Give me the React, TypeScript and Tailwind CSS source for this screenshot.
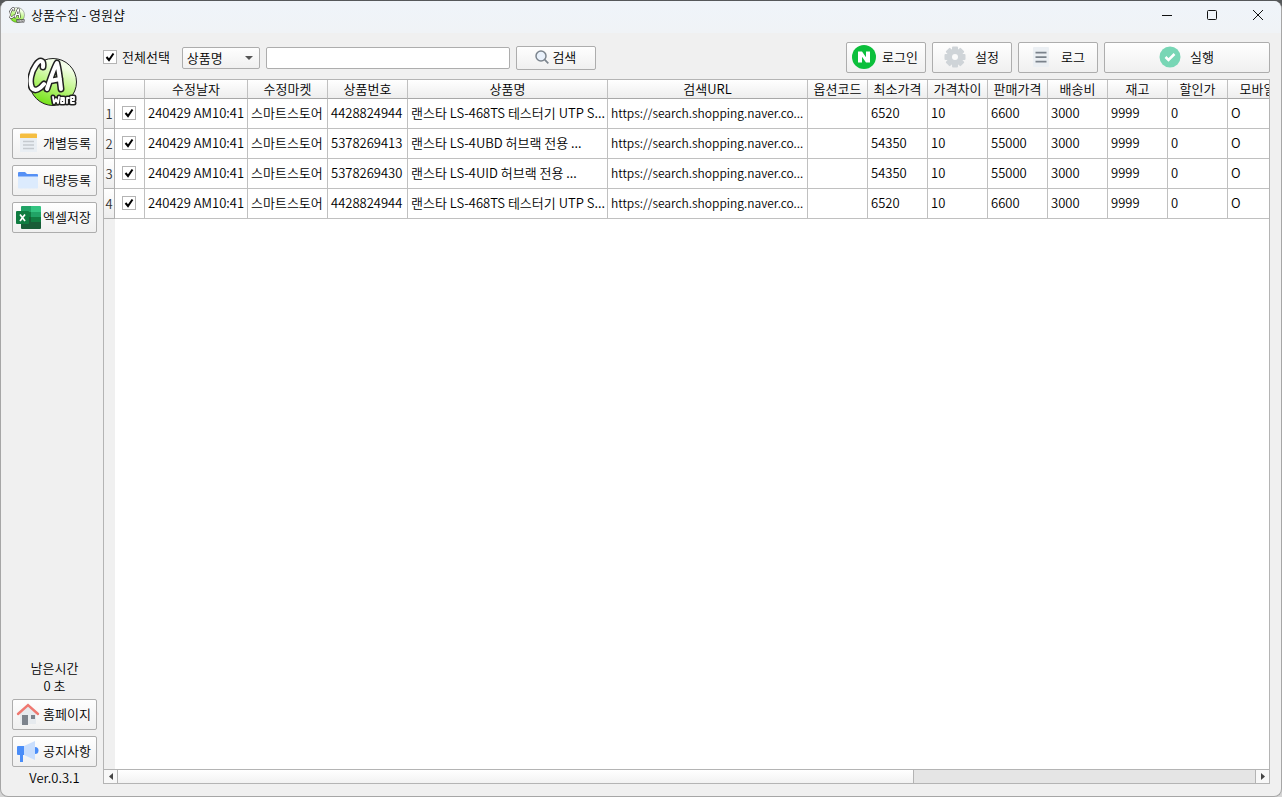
import type { ReactNode } from "react"
import clsx from "clsx"

const buttonStyle =
  "flex items-center rounded-xs border border-[#adadad] bg-linear-to-b from-[#fefefe] to-[#f0f0f0] pb-0.5 whitespace-nowrap"

const columns = [
  { label: "수정날자", width: "w-[103px]" },
  { label: "수정마켓", width: "w-20" },
  { label: "상품번호", width: "w-20" },
  { label: "상품명", width: "w-[200px]" },
  { label: "검색URL", width: "w-[200px]" },
  { label: "옵션코드", width: "w-15" },
  { label: "최소가격", width: "w-15" },
  { label: "가격차이", width: "w-15" },
  { label: "판매가격", width: "w-15" },
  { label: "배송비", width: "w-15" },
  { label: "재고", width: "w-15" },
  { label: "할인가", width: "w-15" },
  { label: "모바일", width: "w-15" },
]

const url = "https://search.shopping.naver.co..."

const rows = [
  ["240429 AM10:41", "스마트스토어", "4428824944", "랜스타 LS-468TS 테스터기 UTP S...", url, "", "6520", "10", "6600", "3000", "9999", "0", "O"],
  ["240429 AM10:41", "스마트스토어", "5378269413", "랜스타 LS-4UBD 허브랙 전용 ...", url, "", "54350", "10", "55000", "3000", "9999", "0", "O"],
  ["240429 AM10:41", "스마트스토어", "5378269430", "랜스타 LS-4UID 허브랙 전용 ...", url, "", "54350", "10", "55000", "3000", "9999", "0", "O"],
  ["240429 AM10:41", "스마트스토어", "4428824944", "랜스타 LS-468TS 테스터기 UTP S...", url, "", "6520", "10", "6600", "3000", "9999", "0", "O"],
]

function Logo({ className, id }: { className: string; id: string }) {
  return (
    <svg viewBox="0 0 50 50" className={className} aria-hidden="true">
      <defs>
        <linearGradient id={id} x1="0.7" y1="0" x2="0.3" y2="1">
          <stop offset="0.15" stopColor="#f4ffe8" />
          <stop offset="0.55" stopColor="#b9f57c" />
          <stop offset="1" stopColor="#6fe010" />
        </linearGradient>
      </defs>
      <circle cx="25" cy="25" r="23.500" fill={`url(#${id})`} stroke="#222" strokeWidth="1" />
      <g fill="none" strokeLinecap="round" strokeLinejoin="round">
        <g stroke="#222" strokeWidth="7">
          <path d="M15 10C16 3 12 2 8 8C3 15 1 25 4 31C7 35 12 32 16 27" />
          <path d="M19 32C22 23 26 11 29 6C31 13 32 23 33 32M22 24L32 22" />
        </g>
        <g stroke="#fff" strokeWidth="4">
          <path d="M15 10C16 3 12 2 8 8C3 15 1 25 4 31C7 35 12 32 16 27" />
          <path d="M19 32C22 23 26 11 29 6C31 13 32 23 33 32M22 24L32 22" />
        </g>
        <g stroke="#222" strokeWidth="5">
          <path d="M25 40L26 46L28 42L30 46L31 40M33 41H36V46H33V43H36M39 46V41H41M46 46H43V40H46V43H43" />
        </g>
        <g stroke="#fff" strokeWidth="1.800">
          <path d="M25 40L26 46L28 42L30 46L31 40M33 41H36V46H33V43H36M39 46V41H41M46 46H43V40H46V43H43" />
        </g>
      </g>
    </svg>
  )
}

function NoteIcon() {
  return (
    <svg viewBox="0 0 24 24" className="size-6" aria-hidden="true">
      <path d="M4 6h17v15H4z" fill="#e9eef3" />
      <path d="M4 3.500a1 1 0 0 1 1-1h15a1 1 0 0 1 1 1V7H4z" fill="#f5be41" />
      <path d="M7 10.500h11M7 14h11M7 17.500h11" stroke="#c5cacf" strokeWidth="1.500" />
    </svg>
  )
}

function FolderIcon() {
  return (
    <svg viewBox="0 0 24 24" className="size-6" aria-hidden="true">
      <path d="M2 5a1 1 0 0 1 1-1h6l2 2h10a1 1 0 0 1 1 1v4H2z" fill="#5590f5" />
      <path d="M2 8.500h20v11a1 1 0 0 1-1 1H3a1 1 0 0 1-1-1z" fill="#dcebfd" />
    </svg>
  )
}

function ExcelIcon() {
  return (
    <svg viewBox="0 0 26 24" className="h-6 w-[26px]" aria-hidden="true">
      <path d="M6 2a1 1 0 0 1 1-1h9v6H6z" fill="#21a366" />
      <path d="M16 1h9a1 1 0 0 1 1 1v5H16z" fill="#33c481" />
      <path d="M6 7h10v5H6z" fill="#107c41" />
      <path d="M16 7h10v5H16z" fill="#21a366" />
      <path d="M6 12h10v5H6z" fill="#185c37" />
      <path d="M16 12h10v5H16z" fill="#107c41" />
      <path d="M6 17h20v6a1 1 0 0 1-1 1H7a1 1 0 0 1-1-1z" fill="#185c37" />
      <rect x="1" y="6" width="13" height="13" rx="1" fill="#107c41" />
      <path d="M5 9.500l5 6.500M10 9.500L5 16" stroke="#fff" strokeWidth="1.700" />
    </svg>
  )
}

function HomeIcon() {
  return (
    <svg viewBox="0 0 24 24" className="size-6" aria-hidden="true">
      <path d="M4 11l8-7 8 7v11H4z" fill="#e6eaee" />
      <path d="M6 13h6v10H6zM15 13h4v4h-4z" fill="#7c838c" />
      <path d="M2 12L12 3l10 9" fill="none" stroke="#ef7870" strokeWidth="2.400" strokeLinecap="round" />
    </svg>
  )
}

function MegaphoneIcon() {
  return (
    <svg viewBox="0 0 24 24" className="size-6" aria-hidden="true">
      <path d="M19 8a3.500 3.500 0 0 1 0 7z" fill="#4a8df8" />
      <path d="M8 7l11-5v19L8 16z" fill="#c9defd" />
      <path d="M2 7h6v9H7v7H4v-7H2a1 1 0 0 1-1-1V8a1 1 0 0 1 1-1z" fill="#4a8df8" />
    </svg>
  )
}

function NaverIcon() {
  return (
    <svg viewBox="0 0 24 24" className="size-6" aria-hidden="true">
      <circle cx="12" cy="12" r="12" fill="#0bbf3b" />
      <path d="M6 6.500h4l4 5.800V6.500h4v11h-4l-4-5.800v5.800H6z" fill="#fff" />
    </svg>
  )
}

function GearIcon() {
  return (
    <svg viewBox="0 0 24 24" className="size-6" aria-hidden="true">
      <g fill="#cfd4d8">
        <rect x="9" y="1.500" width="6" height="21" rx="1" />
        <rect x="9" y="1.500" width="6" height="21" rx="1" transform="rotate(45 12 12)" />
        <rect x="9" y="1.500" width="6" height="21" rx="1" transform="rotate(90 12 12)" />
        <rect x="9" y="1.500" width="6" height="21" rx="1" transform="rotate(135 12 12)" />
        <circle cx="12" cy="12" r="8" />
      </g>
      <circle cx="12" cy="12" r="3" fill="#fafafa" />
    </svg>
  )
}

function LogIcon() {
  return (
    <svg viewBox="0 0 24 24" className="size-6" aria-hidden="true">
      <rect x="4" y="2" width="16" height="20" rx="1" fill="#ebeff3" />
      <path d="M6.500 7.700h11M6.500 12.200h11M6.500 16.700h11" stroke="#7a828b" strokeWidth="1.800" />
    </svg>
  )
}

function RunIcon() {
  return (
    <svg viewBox="0 0 24 24" className="size-6" aria-hidden="true">
      <circle cx="12" cy="12" r="10.500" fill="#78d6b5" />
      <path d="M7.500 12l3 3 6-6" fill="none" stroke="#fff" strokeWidth="2.500" />
    </svg>
  )
}

function SearchIcon() {
  return (
    <svg viewBox="0 0 14 14" className="size-3.5" aria-hidden="true">
      <circle cx="6" cy="6" r="5" fill="#e9f1fb" stroke="#7c858e" strokeWidth="1.500" />
      <path d="M9.700 9.700L13.300 13.300" stroke="#7c858e" strokeWidth="1.700" />
    </svg>
  )
}

function CheckBox({ id, label }: { id: string; label?: string }) {
  return (
    <span className="relative block size-3.5">
      <input
        id={id}
        type="checkbox"
        defaultChecked
        aria-label={label}
        className="peer block size-3.5 appearance-none border border-[#b4b4b4] bg-white"
      />
      <svg
        viewBox="0 0 14 14"
        className="pointer-events-none absolute inset-0 hidden size-3.5 peer-checked:block"
        aria-hidden="true"
      >
        <path d="M3.500 7L6 10L10.500 3.500" fill="none" stroke="#000" strokeWidth="2" />
      </svg>
    </span>
  )
}

function SideButton({ icon, children }: { icon: ReactNode; children: ReactNode }) {
  return (
    <button type="button" className={clsx(buttonStyle, "h-[31px] w-full gap-0.5 pl-0.5")}>
      <span className="flex w-[26px] shrink-0 justify-center">{icon}</span>
      {children}
    </button>
  )
}

function ToolButton({ icon, className, children }: { icon: ReactNode; className: string; children: ReactNode }) {
  return (
    <button type="button" className={clsx(buttonStyle, "h-[31px] justify-center pr-0.5", className)}>
      {icon}
      {children}
    </button>
  )
}

function TitleBar() {
  return (
    <header className="flex h-8 shrink-0 items-center bg-linear-to-b from-[#eff4fa] to-[#f0f3f6] pb-1 pl-2">
      <Logo id="logo-small" className="size-4" />
      <h1 className="ml-1.5 flex-1 text-[13px]">상품수집 - 영원샵</h1>
      <button type="button" aria-label="최소화" className="flex h-full w-11 items-center justify-center">
        <svg viewBox="0 0 10 10" className="size-2.5" aria-hidden="true">
          <path d="M0 5.500h10" stroke="#111" />
        </svg>
      </button>
      <button type="button" aria-label="최대화" className="flex h-full w-[46px] items-center justify-center">
        <svg viewBox="0 0 10 10" className="size-2.5" aria-hidden="true">
          <rect x="0.500" y="0.500" width="9" height="9" rx="1" fill="none" stroke="#111" />
        </svg>
      </button>
      <button type="button" aria-label="닫기" className="flex h-full w-[46px] items-center justify-center">
        <svg viewBox="0 0 10 10" className="size-2.5" aria-hidden="true">
          <path d="M0 0l10 10M10 0L0 10" stroke="#111" />
        </svg>
      </button>
    </header>
  )
}

function Sidebar() {
  return (
    <aside className="flex w-[85px] shrink-0 flex-col pb-[9px]">
      <Logo id="logo-large" className="mt-6 mr-1 mb-[21px] size-[50px] self-center" />
      <nav className="flex flex-col gap-1.5">
        <SideButton icon={<NoteIcon />}>개별등록</SideButton>
        <SideButton icon={<FolderIcon />}>대량등록</SideButton>
        <SideButton icon={<ExcelIcon />}>엑셀저장</SideButton>
      </nav>
      <p className="mt-auto mb-1 text-center leading-[18px]">
        남은시간
        <br />0 초
      </p>
      <div className="flex flex-col gap-1.5">
        <SideButton icon={<HomeIcon />}>홈페이지</SideButton>
        <SideButton icon={<MegaphoneIcon />}>공지사항</SideButton>
      </div>
      <p className="pt-0.5 text-center leading-[18px]">Ver.0.3.1</p>
    </aside>
  )
}

function Toolbar() {
  return (
    <div className="flex h-[31px] shrink-0 items-center gap-1.5">
      <label htmlFor="select-all" className="mr-1.5 flex items-center gap-[5px] pb-0.5">
        <CheckBox id="select-all" />
        전체선택
      </label>
      <div className="relative">
        <select
          aria-label="검색 항목"
          className="block h-[22px] w-[78px] appearance-none rounded-xs border border-[#adadad] bg-linear-to-b from-[#fefefe] to-[#f0f0f0] pb-0.5 pl-1"
        >
          <option>상품명</option>
          <option>상품번호</option>
        </select>
        <svg viewBox="0 0 8 4" className="pointer-events-none absolute top-[9px] right-[7px] h-1 w-2" aria-hidden="true">
          <path d="M0 0h8L4 4z" fill="#555" />
        </svg>
      </div>
      <input
        type="text"
        aria-label="검색어"
        className="h-[22px] w-[244px] rounded-xs border border-[#adadad] bg-white px-1"
      />
      <button type="button" className={clsx(buttonStyle, "h-6 w-20 justify-center gap-[3px]")}>
        <SearchIcon />
        검색
      </button>
      <div className="ml-auto flex gap-1.5">
        <ToolButton icon={<NaverIcon />} className="w-20 gap-1.5">
          로그인
        </ToolButton>
        <ToolButton icon={<GearIcon />} className="w-20 gap-2">
          설정
        </ToolButton>
        <ToolButton icon={<LogIcon />} className="w-20 gap-2">
          로그
        </ToolButton>
        <ToolButton icon={<RunIcon />} className="w-[166px] gap-2">
          실행
        </ToolButton>
      </div>
    </div>
  )
}

function ProductTable() {
  return (
    <table className="w-max table-fixed border-separate border-spacing-0">
      <thead>
        <tr className="h-[19px] bg-linear-to-b from-white to-[#ededed]">
          <th className="w-[11px] border-b border-[#a8a8a8] p-0" />
          <th className="w-[30px] border-r border-b border-[#c0c0c0] border-b-[#a8a8a8] p-0" />
          {columns.map((column) => (
            <th
              key={column.label}
              className={clsx(
                "border-r border-b border-[#c0c0c0] border-b-[#a8a8a8] p-0 leading-[18px] font-[350] whitespace-nowrap",
                column.width
              )}
            >
              {column.label}
            </th>
          ))}
        </tr>
      </thead>
      <tbody>
        {rows.map((row, i) => (
          <tr key={i} className="h-[30px]">
            <th className="border-r border-b border-[#b0b0b0] bg-linear-to-b from-white to-[#ededed] p-0 text-center font-[350] text-[#333]">
              {i + 1}
            </th>
            <td className="border-r border-b border-[#c0c0c0] p-0 pb-0.5 pl-[7px]">
              <CheckBox id={`row-${i}`} label={`${i + 1}행 선택`} />
            </td>
            {row.map((cell, j) => (
              <td
                key={j}
                className={clsx(
                  "border-r border-b border-[#c0c0c0] p-0 pb-0.5 pl-[3px] whitespace-nowrap",
                  j === 4 && "text-xs"
                )}
              >
                {cell}
              </td>
            ))}
          </tr>
        ))}
      </tbody>
    </table>
  )
}

function ScrollBar() {
  return (
    <div className="flex h-[15px] shrink-0 border border-[#b4b4b4] bg-[#e5e5e5]">
      <button
        type="button"
        aria-label="왼쪽으로 스크롤"
        className="flex w-3.5 items-center justify-center border-r border-[#b4b4b4] bg-[#f8f8f8]"
      >
        <svg viewBox="0 0 4 7" className="h-[7px] w-1" aria-hidden="true">
          <path d="M4 0v7L0 3.500z" fill="#444" />
        </svg>
      </button>
      <div className="flex flex-1">
        <div className="w-[70%] border-r border-[#b4b4b4] bg-linear-to-b from-white to-[#f2f2f2]" />
      </div>
      <button
        type="button"
        aria-label="오른쪽으로 스크롤"
        className="flex w-3.5 items-center justify-center border-l border-[#b4b4b4] bg-[#f8f8f8]"
      >
        <svg viewBox="0 0 4 7" className="h-[7px] w-1" aria-hidden="true">
          <path d="M0 0v7l4-3.500z" fill="#444" />
        </svg>
      </button>
    </div>
  )
}

export default function App() {
  return (
    <div className="flex min-h-screen flex-col bg-[#8b8d8f] bg-linear-to-b from-[#55585a] to-[#d5d5d5] pt-px font-['Noto_Sans_CJK_KR',sans-serif] text-[13px] font-[350] text-black">
      <div className="flex flex-1 flex-col overflow-hidden rounded-lg border-x border-b border-[#a6a6a6] bg-[#f0f0f0]">
        <TitleBar />
        <div className="flex min-h-0 flex-1 gap-1.5 px-[11px]">
          <Sidebar />
          <main className="flex min-w-0 flex-1 flex-col pt-[9px] pb-3">
            <Toolbar />
            <div className="mt-1.5 min-h-0 flex-1 overflow-hidden border-x border-t border-[#b4b4b4] bg-linear-to-r from-[#f0f0f0] from-[11px] to-white to-[11px]">
              <ProductTable />
            </div>
            <ScrollBar />
          </main>
        </div>
      </div>
    </div>
  )
}
